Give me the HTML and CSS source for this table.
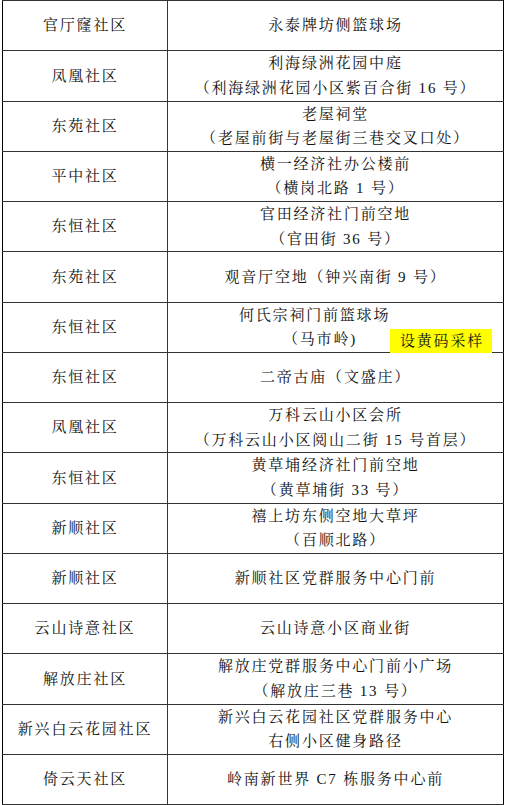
FILE: index.html
```html
<!DOCTYPE html>
<html lang="zh-CN">
<head>
<meta charset="utf-8">
<title>采样点</title>
<link rel="stylesheet" href="styles.css">
</head>
<body>
<table class="sites">
  <tr><td class="name">官厅窿社区</td><td class="place">永泰牌坊侧篮球场</td></tr>
  <tr><td class="name">凤凰社区</td><td class="place">利海绿洲花园中庭<br>（利海绿洲花园小区紫百合街 16 号）</td></tr>
  <tr><td class="name">东苑社区</td><td class="place">老屋祠堂<br>（老屋前街与老屋街三巷交叉口处）</td></tr>
  <tr><td class="name">平中社区</td><td class="place">横一经济社办公楼前<br>（横岗北路 1 号）</td></tr>
  <tr><td class="name">东恒社区</td><td class="place">官田经济社门前空地<br>（官田街 36 号）</td></tr>
  <tr><td class="name">东苑社区</td><td class="place">观音厅空地（钟兴南街 9 号）</td></tr>
  <tr><td class="name">东恒社区</td><td class="place special">
    <div class="sp-line1">何氏宗祠门前篮球场</div>
    <div class="sp-line2"><span>（马市岭)</span><span class="mark">设黄码采样</span></div>
  </td></tr>
  <tr><td class="name">东恒社区</td><td class="place">二帝古庙（文盛庄）</td></tr>
  <tr><td class="name">凤凰社区</td><td class="place">万科云山小区会所<br>（万科云山小区阅山二街 15 号首层）</td></tr>
  <tr><td class="name">东恒社区</td><td class="place">黄草埔经济社门前空地<br>（黄草埔街 33 号）</td></tr>
  <tr><td class="name">新顺社区</td><td class="place">禧上坊东侧空地大草坪<br>（百顺北路）</td></tr>
  <tr><td class="name">新顺社区</td><td class="place">新顺社区党群服务中心门前</td></tr>
  <tr><td class="name">云山诗意社区</td><td class="place">云山诗意小区商业街</td></tr>
  <tr><td class="name">解放庄社区</td><td class="place">解放庄党群服务中心门前小广场<br>（解放庄三巷 13 号）</td></tr>
  <tr><td class="name">新兴白云花园社区</td><td class="place">新兴白云花园社区党群服务中心<br>右侧小区健身路径</td></tr>
  <tr><td class="name">倚云天社区</td><td class="place">岭南新世界 C7 栋服务中心前</td></tr>
</table>
</body>
</html>
```

FILE: styles.css
```css
html, body {
  margin: 0;
  padding: 0;
  background: #ffffff;
}

body {
  padding-left: 2px;
  font-family: "Liberation Serif", "Noto Serif CJK SC", "Noto Sans CJK SC", serif;
  font-size: 15px;
  color: #111111;
}

.sites {
  border-collapse: collapse;
  table-layout: fixed;
  width: 502px;
}

.sites td {
  border: 1px solid #333333;
  height: 49.25px;
  padding: 0;
  line-height: 24.5px;
  text-align: center;
  vertical-align: middle;
  letter-spacing: 1.8px;
  white-space: nowrap;
}

.sites td.name {
  width: 164px;
  border-left-color: #000000;
}

.sites td.place {
  border-right-color: #000000;
}

.sites td.special {
  text-align: left;
}

.sp-line1 {
  padding-left: 71px;
}

.sp-line2 {
  display: flex;
  align-items: flex-end;
  justify-content: space-between;
  padding-left: 115px;
  padding-right: 11px;
}

.mark {
  background: #ffff00;
  padding: 0 8px 0 10px;
  height: 24px;
  line-height: 24px;
  margin-bottom: -1px;
}
```
